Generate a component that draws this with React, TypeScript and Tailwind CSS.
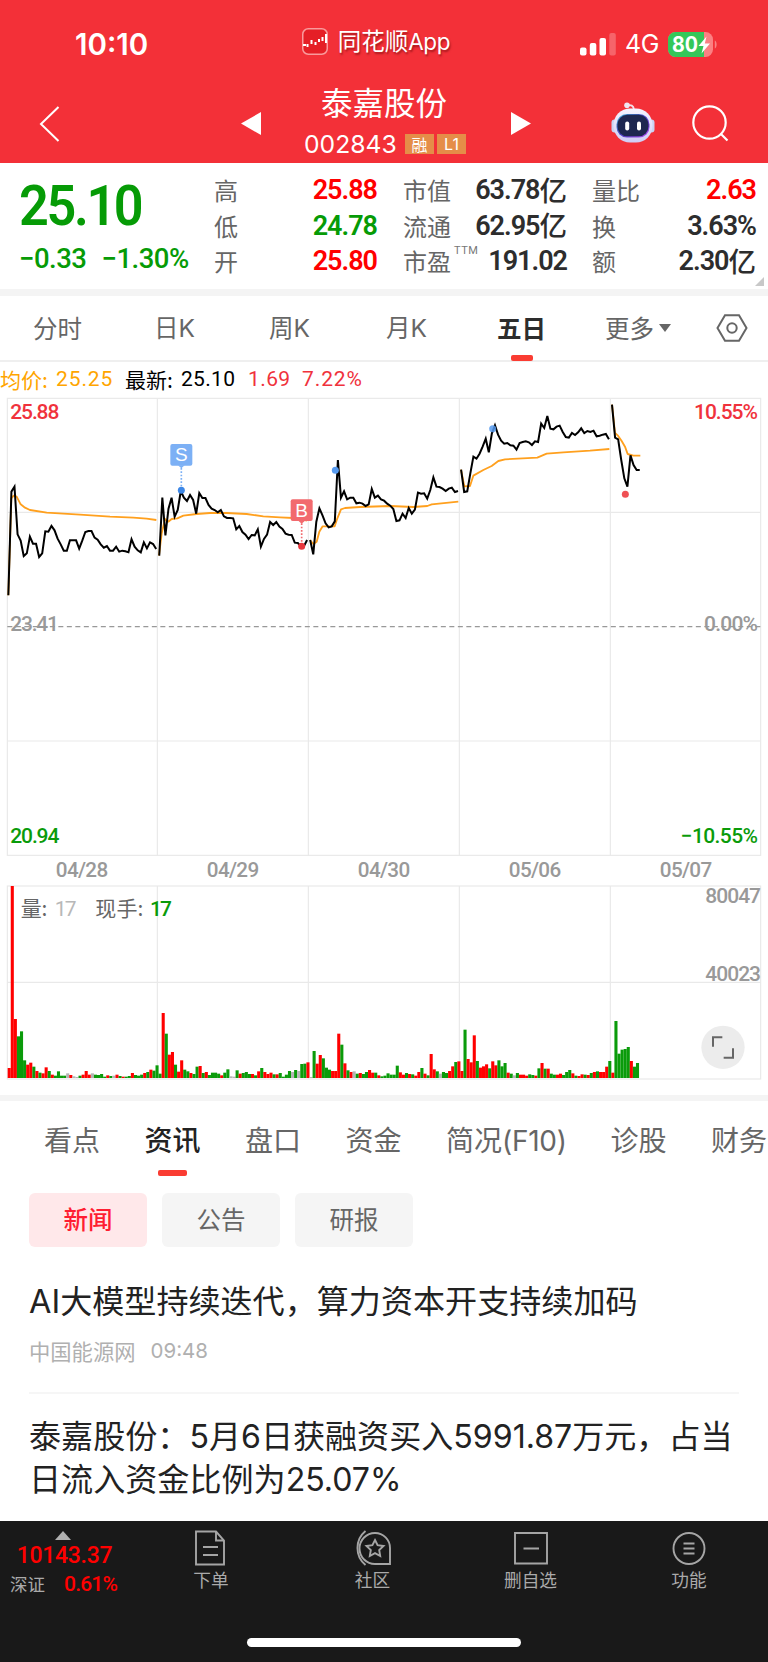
import React from 'react';

const RED = '#ff0000';
const GREEN = '#0a9b0a';
const GREY = '#b4b4b4';

// Chart space is 3 units per css pixel, every session holds 49 five-minute slots
const SESSION_WIDTH = 452.75;
const SLOT_WIDTH = 9.24;
const VOLUME_BASE = 2064;

const sessions = [
    {
        date: '04/28',
        line: [616, 305, 290, 433, 452, 498, 490, 440, 461, 461, 501, 490, 424, 425, 408, 421, 446, 463, 482, 482, 451, 451, 451, 476, 452, 426, 423, 423, 443, 449, 463, 473, 468, 482, 482, 470, 485, 482, 484, 487, 448, 470, 481, 487, 457, 475, 457, 462, 477],
        average: '25,616 34,325 41,317 50,320 62,343 75,353 90,360 140,368 240,374 330,380 400,383 440,386 469,390',
        volume: '30r 576r 177r 125g 140g 53g 40r 46r 34g 21r 16g 14r 32r 21g 10r 7g 20g 7g 7g 14n 9r 5n 3n 7g 10r 21r 10r 14n 10g 9g 12g 4g 8r 6g 7n 10r 6g 4r 4g 6g 15r 9g 7g 10g 15r 18g 25r 22g 38g',
    },
    {
        date: '04/29',
        line: [497, 323, 436, 356, 323, 380, 360, 303, 323, 333, 315, 330, 371, 309, 324, 324, 345, 356, 360, 367, 360, 379, 384, 384, 385, 418, 408, 426, 434, 447, 435, 436, 418, 470, 447, 434, 396, 405, 396, 410, 417, 431, 434, 435, 458, 459, 469, 468, 450],
        average: '477,497 485,430 495,387 505,395 515,387 532,385 550,377 590,372 630,369 680,369 740,372 790,379 840,382 880,384 905,388 921,392',
        volume: '13g 195r 133g 70r 78r 40g 19r 53r 25g 20g 15r 12g 34g 36r 15g 18r 9g 16g 16g 13g 8r 16g 26g 5n 4n 23g 13r 15g 18g 12g 12r 8g 20r 30g 18r 12r 16r 11g 11r 15g 4g 10g 21g 18n 24g 21n 42g 43g 47r',
    },
    {
        date: '04/30',
        line: [450, 493, 395, 355, 376, 400, 412, 409, 394, 210, 323, 304, 328, 323, 323, 340, 338, 341, 348, 343, 297, 323, 317, 328, 332, 341, 347, 357, 393, 391, 371, 384, 354, 371, 359, 308, 311, 310, 326, 300, 262, 290, 291, 296, 303, 296, 293, 306, 303],
        average: '930,450 940,462 950,455 958,425 968,409 1004,409 1012,385 1023,358 1035,354 1080,351 1170,348 1240,351 1282,348 1295,343 1375,335',
        volume: '3n 81g 43r 69r 59g 31g 25g 21r 21r 133r 100g 44r 23g 18r 20n 13g 15r 12g 18g 24r 16r 16g 8r 5g 7g 14g 10g 10g 37g 17r 10r 15g 12r 11g 7r 18r 30g 13r 8g 72r 26r 20g 13n 18g 15g 21r 35r 48g 50r',
    },
    {
        date: '05/06',
        line: [239, 306, 304, 250, 200, 206, 191, 170, 146, 187, 130, 106, 134, 152, 161, 159, 166, 167, 179, 159, 156, 154, 157, 165, 154, 156, 101, 114, 78, 116, 118, 110, 107, 126, 141, 143, 129, 135, 127, 115, 129, 123, 126, 122, 139, 137, 134, 132, 148],
        average: '1383,239 1393,289 1410,288 1420,257 1450,240 1475,228 1495,213 1515,208 1612,203 1640,191 1690,187 1770,182 1828,177',
        volume: '21r 145g 57r 47r 128r 51g 31r 35r 41r 29g 50r 38r 53g 35g 45g 16r 13g 8n 15g 10r 10r 7r 11g 9g 7r 29g 45r 28g 28r 13g 10g 10r 13r 9g 18g 24g 14r 7g 6r 11r 10g 9r 15g 18r 20g 18r 18r 34r 51g',
    },
    {
        date: '05/07',
        line: [44, 143, 148, 210, 265, 290, 196, 225, 240, 240],
        average: '1836,44 1845,129 1853,136 1865,153 1875,170 1883,192 1900,197 1921,197',
        volume: '16r 171g 73g 85g 87g 93g 51r 34g 45g',
    },
];

const barColor = (code: string) => (code === 'r' ? RED : code === 'g' ? GREEN : GREY);

const StatusBar = () => (
    <div className="flex h-[87px] items-center pl-[75px] pr-[50px] text-white">
        <div className="w-[228px] pt-[2px] font-[Inter] text-[29.5px] font-semibold leading-none">10:10</div>
        <div className="flex w-[280px] items-center gap-[10px] pb-[5px]">
            <svg width="26" height="27" viewBox="0 0 26 27">
                <rect x="0.75" y="0.75" width="24.5" height="25.5" rx="5.5" fill="#e51f26" stroke="#f99a9c" strokeWidth="1.5" />
                <path d="M1 17h3M5.500 16v3M9.500 12v4M13.500 14v3M17 11v3M20.500 9v4M24 6v9" stroke="#fff" strokeWidth="2" />
            </svg>
            <span className="whitespace-nowrap text-[23.500px] leading-none [text-shadow:1px_2px_2px_rgba(90,0,0,0.500)]">
                同花顺<span className="font-[Inter] text-[22.500px] tracking-[-0.400px]">App</span>
            </span>
        </div>
        <div className="flex items-center pt-[1px]">
            <svg width="36" height="23" viewBox="0 0 36 23" fill="#fff">
                <rect x="0" y="14.500" width="6.500" height="8" rx="2" />
                <rect x="9.800" y="10" width="6.500" height="12.500" rx="2" />
                <rect x="19.500" y="5" width="6.500" height="17.500" rx="2" />
                <rect x="29.300" y="0" width="6.500" height="22.500" rx="2" opacity="0.250" />
            </svg>
            <span className="ml-[9px] w-[43px] font-[Inter] text-[25px] leading-none tracking-[-0.300px]">4G</span>
            <svg width="50" height="25" viewBox="0 0 50 25">
                <rect x="0" y="0" width="45" height="25" rx="7.500" fill="#fb8083" />
                <path d="M7.500 0H36v25H7.500A7.500 7.500 0 0 1 0 17.500v-10A7.500 7.500 0 0 1 7.500 0z" fill="#34c759" />
                <path d="M46.800 8.500c2.400 1 2.400 7 0 8z" fill="#fb8083" />
                <text x="4" y="20" fontFamily="Inter" fontWeight="700" fontSize="21" fill="#fff" textLength="26" lengthAdjust="spacingAndGlyphs">80</text>
                <path d="M38.500 4.500l-8 9.500h5l-2 7.500 8.500-10h-5.200z" fill="#fff" />
            </svg>
        </div>
    </div>
);

const RobotIcon = () => (
    <svg width="44" height="41" viewBox="0 0 44 41">
        <defs>
            <linearGradient id="shell" x1="0" y1="0" x2="0" y2="1">
                <stop offset="0" stopColor="#f6f4ff" />
                <stop offset="1" stopColor="#cfcdf5" />
            </linearGradient>
            <linearGradient id="rim" x1="0" y1="0" x2="1" y2="1">
                <stop offset="0" stopColor="#3fb6d8" />
                <stop offset="0.500" stopColor="#4b3fc0" />
                <stop offset="1" stopColor="#b44bf0" />
            </linearGradient>
        </defs>
        <path d="M16 3.500c4-1 6.500 0 7 4" stroke="#f3dfe8" strokeWidth="1.800" fill="none" />
        <circle cx="16" cy="3.300" r="2.800" fill="#efe6f2" />
        <rect x="0.500" y="17.500" width="6" height="13" rx="3" fill="#c9d3f2" />
        <rect x="37.500" y="17.500" width="6" height="13" rx="3" fill="#c9d3f2" />
        <rect x="2.500" y="6.500" width="39" height="34" rx="16.500" fill="url(#shell)" />
        <rect x="5.500" y="12" width="33" height="23.500" rx="10.500" fill="url(#rim)" />
        <rect x="6.500" y="12.800" width="31" height="21.500" rx="9.800" fill="#1e2750" />
        <rect x="14.200" y="19.500" width="4" height="9" rx="2" fill="#fff" />
        <rect x="26" y="19.500" width="4" height="9" rx="2" fill="#fff" />
    </svg>
);

const TitleBar = () => (
    <div className="flex h-[76px] items-center pl-[39px] text-white">
        <svg className="mt-[-2px]" width="22" height="36" viewBox="0 0 22 36" fill="none" stroke="#fff" strokeWidth="2">
            <path d="M19.500 1L2 18l17.500 17" />
        </svg>
        <svg className="ml-[180px] mt-[-4px]" width="20" height="23" viewBox="0 0 20 23" fill="#fff"><path d="M20 0v23L0 11.500z" /></svg>
        <div className="ml-[34px] flex w-[180px] flex-col items-center self-start">
            <div className="ml-[-2px] mt-[-4px] whitespace-nowrap text-[31.500px] leading-[36px]">泰嘉股份</div>
            <div className="mt-[12px] flex h-[26px] w-[162px] items-center justify-between">
                <span className="font-[Inter] text-[24.700px] leading-none">002843</span>
                <div className="flex gap-[3px] text-[16px] leading-[20px]">
                    <span className="h-[20px] w-[29px] bg-[#e58d48] text-center">融</span>
                    <span className="h-[20px] w-[29px] bg-[#e58d48] text-center font-[Inter]">L1</span>
                </div>
            </div>
        </div>
        <svg className="ml-[36px] mt-[-4px]" width="20" height="23" viewBox="0 0 20 23" fill="#fff"><path d="M0 0v23l20-11.500z" /></svg>
        <div className="ml-[80px] mt-[-5px]"><RobotIcon /></div>
        <svg className="ml-[37px] mt-[-4px]" width="37" height="37" viewBox="0 0 37 37" fill="none" stroke="#fff" strokeWidth="2.200">
            <circle cx="17.500" cy="17.500" r="16.200" />
            <path d="M28.500 28.500l7 7" />
        </svg>
    </div>
);

type QuoteRow = { label: string; value: string; unit?: string; color?: string; sup?: string };

const QuoteColumn = ({ rows, className }: { rows: QuoteRow[]; className: string }) => (
    <div className={'flex flex-col ' + className}>
        {rows.map((row) => (
            <div key={row.label} className="flex h-[35.500px] items-center justify-between">
                <span className="relative mt-[-1px] text-[24px] leading-none text-[#666]">
                    {row.label}
                    {row.sup && <span className="absolute left-[51px] top-[-4px] font-[Roboto] text-[11px] leading-none tracking-[0.5px] text-[#777]">{row.sup}</span>}
                </span>
                <span className={'flex items-center font-[Roboto] text-[27px] font-semibold leading-none tracking-[-1px] ' + (row.color || 'text-[#2d2d2d]')}>
                    {row.value}
                    {row.unit && <span className="mt-[-3px] font-['Noto_Sans_CJK_SC'] text-[27.500px] font-medium tracking-normal">{row.unit}</span>}
                </span>
            </div>
        ))}
    </div>
);

const QuotePanel = () => (
    <div className="relative flex h-[126px] bg-white pt-[10px]">
        <div className="w-[214px] pl-[19px] font-[Roboto] font-semibold text-[#069b06]">
            <div className="mt-[5px] origin-left scale-x-[0.940] text-[55.500px] leading-[58px] tracking-[-2.500px]">25.10</div>
            <div className="mt-[8px] flex gap-[15px] whitespace-nowrap text-[27.500px] font-medium leading-[30px] tracking-[-0.500px]">
                <span>−0.33</span>
                <span>−1.30%</span>
            </div>
        </div>
        <QuoteColumn
            className="w-[163px]"
            rows={[
                { label: '高', value: '25.88', color: 'text-[#ff0000]' },
                { label: '低', value: '24.78', color: 'text-[#069b06]' },
                { label: '开', value: '25.80', color: 'text-[#ff0000]' },
            ]}
        />
        <QuoteColumn
            className="ml-[26px] w-[164px]"
            rows={[
                { label: '市值', value: '63.78', unit: '亿' },
                { label: '流通', value: '62.95', unit: '亿' },
                { label: '市盈', value: '191.02', sup: 'TTM' },
            ]}
        />
        <QuoteColumn
            className="ml-[25px] w-[164px]"
            rows={[
                { label: '量比', value: '2.63', color: 'text-[#ff0000]' },
                { label: '换', value: '3.63%' },
                { label: '额', value: '2.30', unit: '亿' },
            ]}
        />
        <svg className="absolute bottom-[3px] right-[4px]" width="9" height="9" viewBox="0 0 9 9"><path d="M9 0v9H0z" fill="#c8c8c8" /></svg>
    </div>
);

const PeriodTabs = () => (
    <div className="flex h-[66px] items-center border-b-2 border-[#efefef] text-[24.500px] leading-none text-[#666]">
        <span className="w-[121px] pl-[33px]">分时</span>
        <span className="w-[115px] pl-[33px]">日<span className="font-[Inter]">K</span></span>
        <span className="w-[116px] pl-[33px]">周<span className="font-[Inter]">K</span></span>
        <span className="w-[145px] pl-[34px]">月<span className="font-[Inter]">K</span></span>
        <div className="relative flex h-full w-[108px] items-center font-bold text-[#2d2d2d]">
            五日
            <span className="absolute bottom-[-1px] left-[14px] h-[6px] w-[22px] rounded-[2px] bg-[#fa3c32]" />
        </div>
        <span>更多</span>
        <svg className="ml-[5px]" width="12" height="8" viewBox="0 0 12 8"><path d="M0 0h12L6 8z" fill="#666" /></svg>
        <svg className="ml-[45px]" width="32" height="28" viewBox="0 0 32 28" fill="none" stroke="#666" strokeWidth="2">
            <path d="M9 1.200h14L30.500 14 23 26.800H9L1.500 14z" />
            <circle cx="16" cy="14" r="4.700" />
        </svg>
    </div>
);

const ChartLegend = () => (
    <div className="flex h-[28px] items-center pt-[7px] text-[21px] leading-none">
        <span className="w-[56px] text-[#ffa500]">均价:</span>
        <span className="w-[69px] font-[Roboto] tracking-[0.900px] text-[#ffa500]">25.25</span>
        <span className="w-[56px] text-black">最新:</span>
        <span className="w-[67px] font-[Roboto] tracking-[0.300px] text-black">25.10</span>
        <span className="w-[54px] font-[Roboto] tracking-[0.400px] text-[#f0323c]">1.69</span>
        <span className="font-[Roboto] tracking-[0.900px] text-[#f0323c]">7.22%</span>
    </div>
);

const TradeFlag = ({ x, y, dotY, color, dot, label }: { x: number; y: number; dotY: number; color: string; dot: string; label: string }) => (
    <g>
        <path d={`M${x} ${y + 72}V${dotY}`} stroke={color} strokeWidth="5" strokeDasharray="5 5" />
        <circle cx={x} cy={dotY} r="10.500" fill={dot} />
        <rect x={x - 33} y={y} width="66" height="65" rx="6" fill={color} />
        <path d={`M${x - 10} ${y + 64}h20l-10 9z`} fill={color} />
        <text x={x} y={y + 52} textAnchor="middle" fontFamily="Liberation Sans" fontSize="57" fill="#fff">{label}</text>
    </g>
);

const FiveDayChart = () => (
    <svg className="block h-[705px] w-[768px]" viewBox="0 0 2304 2115" fontFamily="Roboto">
        <g fill="none" stroke="#e9e9e9" strokeWidth="3.500">
            <rect x="22" y="25" width="2260" height="1371" />
            <path d="M22 367H2282M22 1053H2282" />
            <path d="M472 25V1396M925 25V1396M1378 25V1396M1831 25V1396" />
            <rect x="22" y="1488" width="2260" height="579" />
            <path d="M22 1777H2282M472 1488V2067M925 1488V2067M1378 1488V2067M1831 1488V2067" />
        </g>
        <path d="M22 710H2282" stroke="#999" strokeWidth="3.500" strokeDasharray="15 10.500" />

        {sessions.map((session, day) => (
            <g key={session.date}>
                <polyline points={session.average} fill="none" stroke="#ffa01e" strokeWidth="5.500" strokeLinejoin="round" />
                <polyline
                    points={session.line.map((y, i) => `${25 + day * SESSION_WIDTH + i * SLOT_WIDTH},${y}`).join(' ')}
                    fill="none"
                    stroke="#000"
                    strokeWidth="6"
                />
                <text x={246 + day * 453} y="1461" textAnchor="middle" fontSize="62" fontWeight="500" fill="#999" textLength="157">
                    {session.date}
                </text>
                {session.volume.split(' ').map((bar, i) => {
                    const height = parseInt(bar, 10);
                    return (
                        <rect
                            key={i}
                            x={23 + day * SESSION_WIDTH + i * SLOT_WIDTH}
                            y={VOLUME_BASE - height}
                            width="9.240"
                            height={height}
                            fill={barColor(bar.slice(-1))}
                        />
                    );
                })}
            </g>
        ))}

        <TradeFlag x={544} y={162} dotY={301} color="#7cb0f5" dot="#3d87e6" label="S" />
        <TradeFlag x={905} y={328} dotY={469} color="#f26a6e" dot="#e8363c" label="B" />
        <circle cx="1006" cy="241" r="10.500" fill="#579bf0" />
        <circle cx="1478" cy="116" r="10.500" fill="#579bf0" fillOpacity="0.850" />
        <circle cx="1876" cy="313" r="10.500" fill="#ef5054" />

        <g fontSize="63" fontWeight="500">
            <text x="31" y="86" fill="#f0323c" textLength="147">25.88</text>
            <text x="31" y="722" fill="#999" textLength="146">23.41</text>
            <text x="31" y="1359" fill={GREEN} textLength="147">20.94</text>
            <text x="2082" y="86" fill="#f0323c" textLength="192">10.55%</text>
            <text x="2112" y="722" fill="#999" textLength="162">0.00%</text>
            <text x="2042" y="1359" fill={GREEN} textLength="232">−10.55%</text>
            <text x="2116" y="1539" fill="#999" textLength="167">80047</text>
            <text x="2116" y="1772" fill="#999" textLength="167">40023</text>
        </g>
        <g fontSize="63">
            <text x="62" y="1577" fontFamily="Noto Sans CJK SC" fill="#666" textLength="80">量:</text>
            <text x="164" y="1577" fill="#b8b8b8" textLength="66">17</text>
            <text x="286" y="1577" fontFamily="Noto Sans CJK SC" fill="#666" textLength="144">现手:</text>
            <text x="450" y="1577" fill={GREEN} fontWeight="500" textLength="66">17</text>
        </g>

        <circle cx="2169" cy="1972" r="65" fill="#ececec" />
        <path d="M2139 1970V1942H2167M2171 2003H2199V1975" fill="none" stroke="#666" strokeWidth="6" />
    </svg>
);

const InfoTabs = () => (
    <div className="flex h-[92px] gap-[44.500px] overflow-hidden whitespace-nowrap pl-[44px] pt-[23px] text-[28px] leading-[30px] text-[#666]">
        <span>看点</span>
        <div className="flex flex-col items-center font-medium text-[#222]">
            资讯
            <span className="mt-[16px] h-[6px] w-[29px] rounded-[2px] bg-[#fa3c32]" />
        </div>
        <span>盘口</span>
        <span>资金</span>
        <span className="w-[120px] shrink-0">简况<span className="font-[Inter] leading-none tracking-[-0.300px]">(F10)</span></span>
        <span>诊股</span>
        <span>财务</span>
    </div>
);

const NewsList = () => (
    <div className="px-[29px]">
        <div className="flex gap-[15px] text-[24.500px] leading-[52px]">
            <span className="h-[54px] w-[118px] rounded-[6px] bg-[#ffe8ea] text-center font-medium text-[#ff1e32]">新闻</span>
            <span className="h-[54px] w-[118px] rounded-[6px] bg-[#f5f5f5] text-center text-[#666]">公告</span>
            <span className="h-[54px] w-[118px] rounded-[6px] bg-[#f5f5f5] text-center text-[#666]">研报</span>
        </div>
        <div className="mt-[31px] h-[116px] border-b-2 border-[#f6f6f6]">
            <div className="h-[43px] whitespace-nowrap text-[32.100px] leading-[43px] text-[#222]"><span className="font-[Inter] text-[32.500px] leading-none">AI</span>大模型持续迭代，算力资本开支持续加码</div>
            <div className="mt-[18px] flex gap-[15px] text-[21.300px] leading-[24px] text-[#b0b0b0]">
                <span>中国能源网</span>
                <span className="font-[Inter] text-[20.500px]">09:48</span>
            </div>
        </div>
        <div className="mt-[19px] whitespace-nowrap text-[32.100px] leading-[43px] text-[#222]">
            泰嘉股份：<span className="font-[Inter] leading-none">5</span>月<span className="font-[Inter] leading-none">6</span>日获融资买入<span className="font-[Inter] leading-none">5991.87</span>万元，占当
            <br />
            日流入资金比例为<span className="font-[Inter] leading-none">25.07%</span>
        </div>
    </div>
);

const toolbar = [
    {
        label: '下单',
        className: 'w-[158px]',
        icon: <path d="M3 1.500h20l8 9V34.500H3zM23 1.500v9h8M10 17h15M10 25h15" />,
    },
    {
        label: '社区',
        className: 'w-[165px]',
        icon: (
            <>
                <path d="M20 3a15.500 15.500 0 0 0 0 31H35V18A15 15 0 0 0 20 3z" />
                <path d="M10.500 1a22 22 0 0 0 0 34" />
                <path d="M20 10l2.600 5.200 5.900.8-4.300 4 1 6-5.200-2.800-5.200 2.800 1-6-4.300-4 5.900-.8z" />
            </>
        ),
    },
    {
        label: '删自选',
        className: 'w-[151px]',
        icon: <path d="M2 3h32v30.500H2zM10.500 18.500h15.500" />,
    },
    {
        label: '功能',
        className: 'w-[166px]',
        icon: (
            <>
                <circle cx="18" cy="18.500" r="15.500" />
                <path d="M12.500 13.500h11M12.500 18.500h11M12.500 23.500h11" />
            </>
        ),
    },
];

const BottomBar = () => (
    <div className="flex h-[141px] flex-col items-center justify-between bg-[#191919] pb-[15px]">
        <div className="flex w-full">
            <div className="flex w-[132px] shrink-0 flex-col items-center pt-[10px]">
                <svg className="mr-[6px]" width="16" height="9" viewBox="0 0 16 9"><path d="M8 0l8 9H0z" fill="#b0b0b0" /></svg>
                <div className="mr-[3px] mt-[3px] font-[Roboto] text-[23px] font-medium leading-[26px] tracking-[-0.300px] text-[#ff0000]">10143.37</div>
                <div className="mt-[2px] flex w-full items-center pl-[10px]">
                    <span className="w-[54px] text-[17.500px] leading-[26px] text-[#aaa]">深证</span>
                    <span className="font-[Roboto] text-[21px] font-medium leading-[26px] tracking-[-0.800px] text-[#ff0000]">0.61%</span>
                </div>
            </div>
            {toolbar.map((item) => (
                <div key={item.label} className={'flex shrink-0 flex-col items-center pt-[9px] ' + item.className}>
                    <svg width="36" height="36" viewBox="0 0 36 36" fill="none" stroke="#a5a5a5" strokeWidth="1.900">{item.icon}</svg>
                    <span className="text-[17.700px] leading-[26px] text-[#aaa]">{item.label}</span>
                </div>
            ))}
        </div>
        <div className="h-[9px] w-[274px] rounded-full bg-white" />
    </div>
);

const App = () => {
    return (
        <div className="h-[1662px] w-[768px] overflow-hidden bg-white font-['Noto_Sans_CJK_SC',sans-serif]">
            <header className="h-[163px] bg-[#f33038]">
                <StatusBar />
                <TitleBar />
            </header>
            <QuotePanel />
            <div className="h-[7px] bg-[#f4f4f4]" />
            <PeriodTabs />
            <ChartLegend />
            <FiveDayChart />
            <div className="h-[6px] bg-[#f4f4f4]" />
            <div className="h-[420px]">
                <InfoTabs />
                <NewsList />
            </div>
            <BottomBar />
        </div>
    );
};

export default App;
